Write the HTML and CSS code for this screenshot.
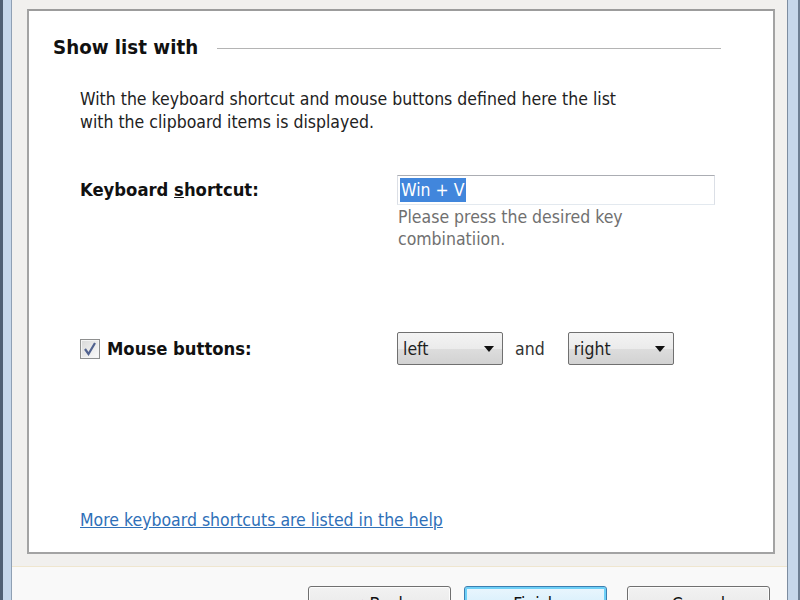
FILE: index.html
```html
<!DOCTYPE html>
<html>
<head>
<meta charset="utf-8">
<link rel="stylesheet" href="styles.css">
</head>
<body>
<div class="window">
  <div class="frame frame-left"></div>
  <div class="main">
    <div class="content-area">
      <div class="panel">
        <div class="heading">
          <span class="heading-text">Show list with</span>
          <span class="heading-line"></span>
        </div>
        <p class="desc">With the keyboard shortcut and mouse buttons defined here the list<br>with the clipboard items is displayed.</p>
        <div class="row row-key">
          <div class="label">Keyboard <u>s</u>hortcut:</div>
          <div class="field">
            <div class="input"><span class="sel">Win + V</span></div>
            <div class="hint">Please press the desired key<br>combinatiion.</div>
          </div>
        </div>
        <div class="row row-mouse">
          <div class="label check-label">
            <span class="checkbox">
              <svg width="16" height="16" viewBox="0 0 16 16"><path d="M3 8 L6.5 13 L13 2" fill="none" stroke="#51628f" stroke-width="2.2"/></svg>
            </span>
            Mouse buttons:
          </div>
          <div class="field combos">
            <div class="combo"><span>left</span><span class="arrow"></span></div>
            <span class="and">and</span>
            <div class="combo"><span>right</span><span class="arrow"></span></div>
          </div>
        </div>
        <div class="spacer"></div>
        <a class="link" href="#">More keyboard shortcuts are listed in the help</a>
      </div>
    </div>
    <div class="button-bar">
      <div class="btn">&lt; Back</div>
      <div class="btn btn-focus">Finish</div>
      <div class="btn">Cancel</div>
    </div>
  </div>
  <div class="frame frame-right"></div>
</div>
</body>
</html>
```

FILE: styles.css
```css
html, body {
  margin: 0;
  padding: 0;
  width: 800px;
  height: 600px;
  overflow: hidden;
  background: #f0f0f0;
}

body {
  font-family: "DejaVu Sans Condensed", "DejaVu Sans", sans-serif;
  font-stretch: condensed;
  font-size: 17.5px;
  color: #1e1e1e;
}

.window {
  display: flex;
  width: 800px;
  height: 600px;
}

.frame {
  flex: none;
  height: 100%;
}

.frame-left {
  width: 8px;
  background: #c6d7ea;
  border-left: 3px solid #4f5f73;
  border-right: 1px solid #8fa0b4;
}

.frame-right {
  width: 10px;
  background: #c6d7ea;
  border-left: 1px solid #7d8da0;
  border-right: 2px solid #6e7f93;
}

.main {
  flex: 1;
  display: flex;
  flex-direction: column;
  min-width: 0;
}

.content-area {
  background: #f1f0ee;
  padding: 9px 12px 0 15px;
  height: 567px;
  flex: none;
  box-sizing: border-box;
  border-bottom: 1px solid #efe6cf;
}

.panel {
  background: #ffffff;
  border: 2px solid #a3a3a3;
  border-top-color: #9c9c9c;
  height: 545px;
  box-sizing: border-box;
  padding: 24px 52px 0 24px;
  display: flex;
  flex-direction: column;
}

.heading {
  display: flex;
  align-items: center;
  height: 24px;
}

.heading-text {
  font-weight: bold;
  font-size: 20.3px;
  color: #111;
}

.heading-line {
  flex: 1;
  height: 1px;
  background: #b4b4b4;
  margin-left: 19px;
  margin-top: 2px;
}

.desc {
  margin: 29px 0 0 27px;
  line-height: 23px;
  color: #222;
}

.row {
  display: flex;
  margin-left: 27px;
}

.label {
  width: 317px;
  flex: none;
  font-weight: bold;
  font-size: 18.3px;
  color: #111;
}

.row-key {
  margin-top: 41px;
}

.row-key .label {
  line-height: 30px;
}

.field {
  flex: 1;
}

.input {
  height: 30px;
  box-sizing: border-box;
  border: 1px solid #abadb3;
  border-left-color: #dbdfe6;
  border-right-color: #dbdfe6;
  border-bottom-color: #e3e9ef;
  padding: 2px 2px;
  margin-right: 6px;
  display: flex;
  align-items: stretch;
}

.sel {
  background: #4186dc;
  color: #fff;
  padding: 0 1px;
  line-height: 24px;
}

.hint {
  color: #707070;
  line-height: 22px;
  margin-top: 1px;
  padding-left: 1px;
}

.row-mouse {
  margin-top: 82px;
  align-items: center;
}

.check-label {
  display: flex;
  align-items: center;
  gap: 7px;
}

.checkbox {
  width: 20px;
  height: 20px;
  box-sizing: border-box;
  border: 1px solid #8e8f8f;
  background: linear-gradient(135deg, #d8d8d8, #fbfbfb);
  display: flex;
  align-items: center;
  justify-content: center;
  box-shadow: inset 0 0 0 1px #f4f4f4;
}

.combos {
  display: flex;
  align-items: center;
}

.combo {
  width: 106px;
  height: 33px;
  box-sizing: border-box;
  border: 1px solid #707070;
  border-radius: 2px;
  background: linear-gradient(#f3f3f3 0%, #ebebeb 50%, #dddddd 51%, #d2d2d2 100%);
  display: flex;
  align-items: center;
  justify-content: space-between;
  padding: 0 8px 0 5px;
  color: #1e1e1e;
}

.arrow {
  width: 0;
  height: 0;
  border-left: 5px solid transparent;
  border-right: 5px solid transparent;
  border-top: 6px solid #111;
}

.and {
  margin: 0 23px 0 12px;
  color: #333;
}

.spacer {
  flex: 1;
}

.link {
  margin: 0 0 20px 27px;
  color: #2f70b8;
  text-decoration: underline;
  line-height: 24px;
}

.button-bar {
  flex: 1;
  background: #f9f9f9;
  display: flex;
  justify-content: flex-end;
  gap: 13px;
  padding: 19px 17px 0 0;
  overflow: hidden;
}

.btn {
  width: 143px;
  height: 36px;
  box-sizing: border-box;
  border: 1px solid #707070;
  border-radius: 3px;
  background: linear-gradient(#f2f2f2 0%, #ebebeb 50%, #dddddd 51%, #cfcfcf 100%);
  box-shadow: inset 0 0 0 1px #fcfcfc;
  text-align: center;
  line-height: 34px;
  color: #111;
  flex: none;
}

.btn-focus {
  border-color: #3c7fb1;
  background: linear-gradient(#eaf6fd 0%, #d9f0fc 50%, #bee6fd 51%, #a7d9f5 100%);
  box-shadow: inset 0 0 0 2px #6ed0f7;
  margin-right: 7px;
}
```
